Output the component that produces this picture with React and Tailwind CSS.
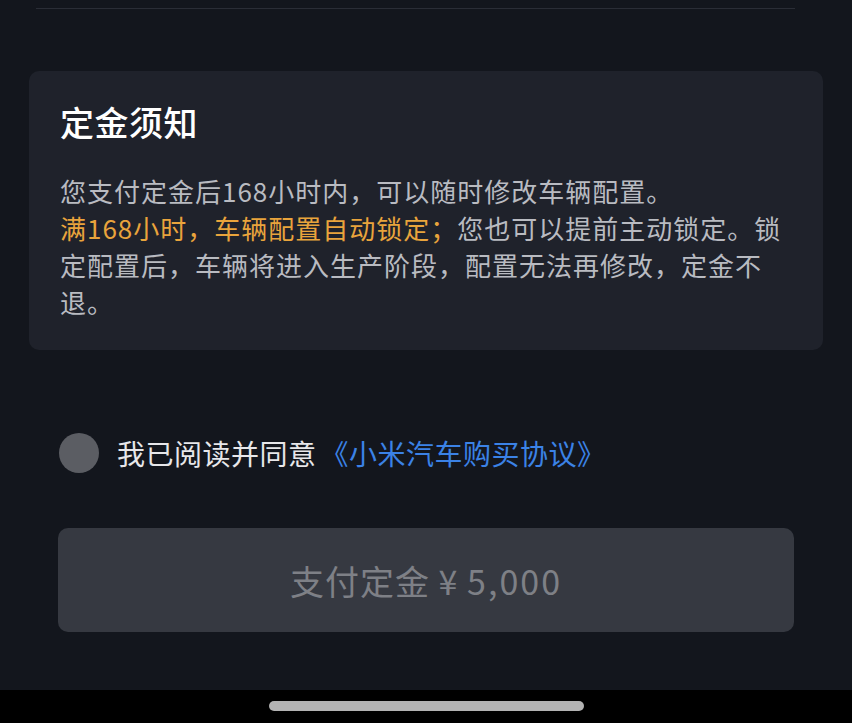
import React from 'react';

const font = { fontFamily: '"Noto Sans CJK SC", "Noto Sans", sans-serif' };

const DepositNotice = () => (
    <div className="ml-[29px] mt-[62px] w-[794px] h-[279px] rounded-[10px] bg-[#1f222b] px-[31px] pt-[31px]">
        <h2 className="text-[34px] leading-[40px] font-medium text-white tracking-[0.5px]">定金须知</h2>
        <div className="mt-[30px] w-[738px] text-[26px] leading-[37px] tracking-[1px] text-[#b9bbc1]">
            <p>您支付定金后168小时内，可以随时修改车辆配置。</p>
            <p>
                <span className="text-[#e9a43c]">满168小时，车辆配置自动锁定；</span>
                您也可以提前主动锁定。锁定配置后，车辆将进入生产阶段，配置无法再修改，定金不退。
            </p>
        </div>
    </div>
);

const App = () => {
    return (
        <div className="w-[852px] h-[723px] bg-[#13161d] flex flex-col overflow-hidden" style={font}>
            <div className="ml-[36px] mt-[8px] w-[759px] h-px bg-[#2a2d36]" />

            <DepositNotice />

            <div className="mt-[83px] ml-[59px] flex items-center h-[40px]">
                <button
                    type="button"
                    className="w-[40px] h-[40px] rounded-full bg-[#5b5d63]"
                    aria-label="同意协议"
                />
                <p className="ml-[18px] text-[28px] leading-none tracking-[0.5px] text-[#e7e7ea]">
                    我已阅读并同意
                    <span className="ml-[4px] text-[#3b82e6]">《小米汽车购买协议》</span>
                </p>
            </div>

            <button
                type="button"
                className="mt-[55px] ml-[58px] w-[736px] h-[104px] rounded-[10px] bg-[#363941] text-[34px] tracking-[1px] text-[#7e8086] flex items-center justify-center"
            >
                <span>
                    支付定金 ¥ <span className="tracking-[2px]">5,000</span>
                </span>
            </button>

            <div className="flex-1" />

            <div className="h-[33px] bg-black flex justify-center pt-[11px]">
                <div className="w-[315px] h-[10px] rounded-full bg-[#b3b3b3]" />
            </div>
        </div>
    );
};

export default App;
